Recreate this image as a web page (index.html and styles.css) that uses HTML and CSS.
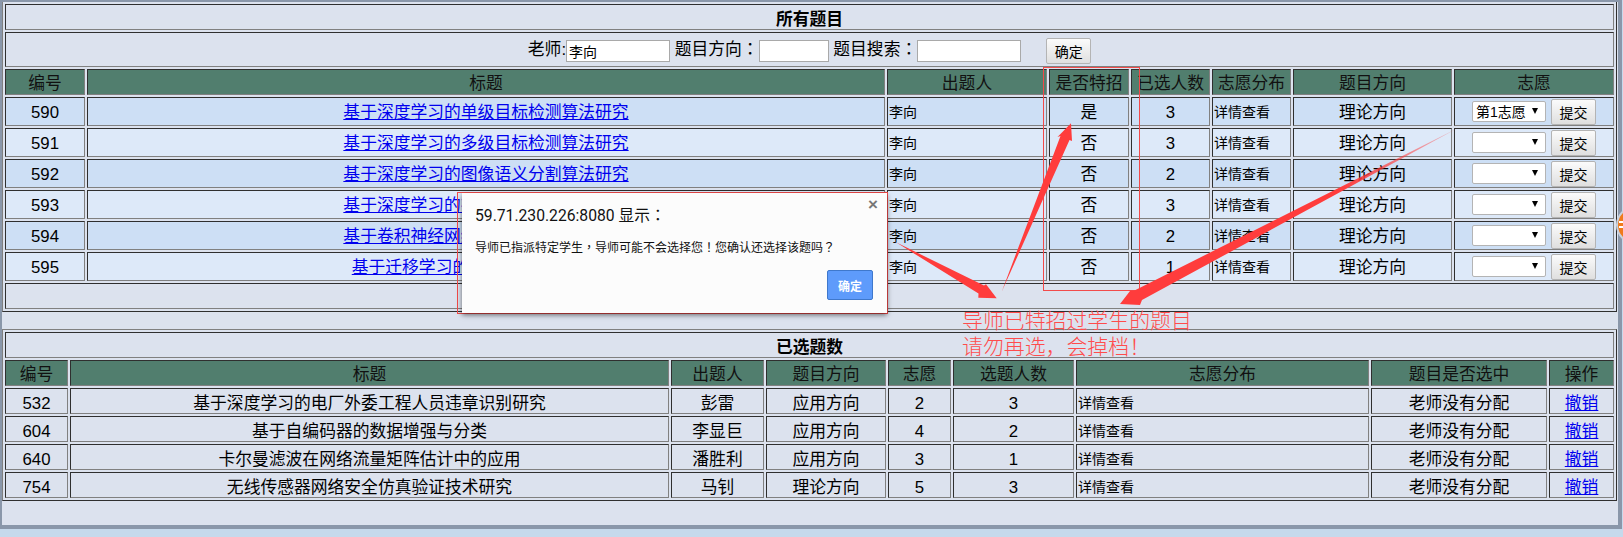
FILE: index.html
```html
<!DOCTYPE html>
<html lang="zh-CN">
<head>
<meta charset="utf-8">
<title>所有题目</title>
<link rel="stylesheet" href="styles.css">
</head>
<body>
<div class="frame">
  <table class="grid grid-all">
    <colgroup><col class="a1"><col class="a2"><col class="a3"><col class="a4"><col class="a5"><col class="a6"><col class="a7"><col class="a8"></colgroup>
    <tr class="r26"><td colspan="8" class="caption">所有题目</td></tr>
    <tr class="r35"><td colspan="8" class="search" lang="zh-TW">老师:<input class="in in-l" value="李向"> 题目方向：<input class="in in-s"> 题目搜索：<input class="in in-l"><button class="btn btn-go">确定</button></td></tr>
    <tr class="r26 head"><td>编号</td><td>标题</td><td>出题人</td><td>是否特招</td><td>已选人数</td><td>志愿分布</td><td>题目方向</td><td>志愿</td></tr>
    <tr class="r29 odd"><td>590</td><td><a href="#">基于深度学习的单级目标检测算法研究</a></td><td class="sm">李向</td><td>是</td><td>3</td><td class="sm">详情查看</td><td>理论方向</td><td class="pk"><div class="pick"><span class="sel"><select><option>第1志愿</option></select></span><button class="btn">提交</button></div></td></tr>
    <tr class="r29 even"><td>591</td><td><a href="#">基于深度学习的多级目标检测算法研究</a></td><td class="sm">李向</td><td>否</td><td>3</td><td class="sm">详情查看</td><td>理论方向</td><td class="pk"><div class="pick"><span class="sel"><select><option></option></select></span><button class="btn">提交</button></div></td></tr>
    <tr class="r29 odd"><td>592</td><td><a href="#">基于深度学习的图像语义分割算法研究</a></td><td class="sm">李向</td><td>否</td><td>2</td><td class="sm">详情查看</td><td>理论方向</td><td class="pk"><div class="pick"><span class="sel"><select><option></option></select></span><button class="btn">提交</button></div></td></tr>
    <tr class="r29 even"><td>593</td><td><a href="#">基于深度学习的视频目标跟踪算法研究</a></td><td class="sm">李向</td><td>否</td><td>3</td><td class="sm">详情查看</td><td>理论方向</td><td class="pk"><div class="pick"><span class="sel"><select><option></option></select></span><button class="btn">提交</button></div></td></tr>
    <tr class="r29 odd"><td>594</td><td><a href="#">基于卷积神经网络的目标识别算法研究</a></td><td class="sm">李向</td><td>否</td><td>2</td><td class="sm">详情查看</td><td>理论方向</td><td class="pk"><div class="pick"><span class="sel"><select><option></option></select></span><button class="btn">提交</button></div></td></tr>
    <tr class="r29 even"><td>595</td><td><a href="#">基于迁移学习的小样本图像分类研究</a></td><td class="sm">李向</td><td>否</td><td>1</td><td class="sm">详情查看</td><td>理论方向</td><td class="pk"><div class="pick"><span class="sel"><select><option></option></select></span><button class="btn">提交</button></div></td></tr>
    <tr class="r26"><td colspan="8"></td></tr>
  </table>

  <table class="grid grid-done">
    <colgroup><col class="b1"><col class="b2"><col class="b3"><col class="b4"><col class="b5"><col class="b6"><col class="b7"><col class="b8"><col class="b9"></colgroup>
    <tr class="r26"><td colspan="9" class="caption">已选题数</td></tr>
    <tr class="r26 head"><td>编号</td><td>标题</td><td>出题人</td><td>题目方向</td><td>志愿</td><td>选题人数</td><td>志愿分布</td><td>题目是否选中</td><td>操作</td></tr>
    <tr class="r26 low"><td>532</td><td>基于深度学习的电厂外委工程人员违章识别研究</td><td>彭雷</td><td>应用方向</td><td>2</td><td>3</td><td class="sm">详情查看</td><td>老师没有分配</td><td><a href="#">撤销</a></td></tr>
    <tr class="r26 low"><td>604</td><td>基于自编码器的数据增强与分类</td><td>李显巨</td><td>应用方向</td><td>4</td><td>2</td><td class="sm">详情查看</td><td>老师没有分配</td><td><a href="#">撤销</a></td></tr>
    <tr class="r26 low"><td>640</td><td>卡尔曼滤波在网络流量矩阵估计中的应用</td><td>潘胜利</td><td>应用方向</td><td>3</td><td>1</td><td class="sm">详情查看</td><td>老师没有分配</td><td><a href="#">撤销</a></td></tr>
    <tr class="r26 low"><td>754</td><td>无线传感器网络安全仿真验证技术研究</td><td>马钊</td><td>理论方向</td><td>5</td><td>3</td><td class="sm">详情查看</td><td>老师没有分配</td><td><a href="#">撤销</a></td></tr>
  </table>
</div>

<div class="dialog-mark"></div>
<div class="dialog">
  <span class="dialog-x">×</span>
  <div class="dialog-title" lang="zh-TW">59.71.230.226:8080 显示：</div>
  <div class="dialog-body" lang="zh-TW">导师已指派特定学生，导师可能不会选择您！您确认还选择该题吗？</div>
  <div class="dialog-foot"><button class="dialog-ok">确定</button></div>
</div>

<svg class="marks" width="1623" height="537" viewBox="0 0 1623 537" aria-hidden="true">
  <defs>
    <linearGradient id="fade" gradientUnits="userSpaceOnUse" x1="1458" y1="128" x2="1340" y2="190">
      <stop offset="0" stop-color="#ff3c3c" stop-opacity=".25"/>
      <stop offset="1" stop-color="#ff3c3c"/>
    </linearGradient>
  </defs>
  <rect x="1043.5" y="67.5" width="96" height="223" fill="none" stroke="#f24a4a"/>
  <polygon points="1001.7,291.7 1060.5,136 1057.5,137 1071,123.3 1072,141 1069.5,140" fill="#ff3c3c"/>
  <polygon points="896,242.3 984,285.5 986,284.3 996.7,298.3 978.3,297.7 978.5,293.5" fill="#ff3c3c"/>
  <polygon points="1458,128 1134.5,290.5 1130,291 1120,304 1140,305 1142,300" fill="url(#fade)"/>
  <circle cx="1635" cy="225" r="18" fill="#f07a1c" stroke="#c9d2de" stroke-width="2"/>
  <rect x="1619" y="221" width="4" height="2" fill="#fff"/>
  <rect x="1619" y="226" width="4" height="2" fill="#fff"/>
</svg>

<div class="note">导师已特招过学生的题目<br>请勿再选，会掉档！</div>
</body>
</html>
```

FILE: styles.css
```css
* { box-sizing: border-box; }

html, body {
  margin: 0;
  height: 537px;
  overflow: hidden;
}

body {
  position: relative;
  background: #c6d9ec;
  font-family: "Liberation Sans", "Noto Sans CJK SC", sans-serif;
  font-size: 16.8px;
  color: #000;
}

.frame {
  width: 1622px;
  height: 529px;
  background: #dce2ee;
  border-top: 2px solid #8a97aa;
  border-left: 2px solid #8a97aa;
  border-right: 4px solid #8a97aa;
  border-bottom: 4px solid #8a97aa;
}

.grid {
  table-layout: fixed;
  width: 1615px;
  border-collapse: separate;
  border-spacing: 2px;
  border: 1px solid;
  border-color: #808080 #2f2f2f #2f2f2f #808080;
}

.grid-all { border-top: 0; }
.grid-done { margin-top: 17px; }

.grid td {
  padding: 0;
  text-align: center;
  vertical-align: middle;
  border: 1px solid;
  border-color: #2f2f2f #808080 #808080 #2f2f2f;
  overflow: hidden;
  white-space: nowrap;
  line-height: 16px;
}

.a1 { width: 80px; }
.a2 { width: 798px; }
.a3 { width: 160px; }
.a4 { width: 80px; }
.a5 { width: 79px; }
.a6 { width: 79px; }
.a7 { width: 159px; }
.a8 { width: 160px; }

.b1 { width: 63px; }
.b2 { width: 599px; }
.b3 { width: 93px; }
.b4 { width: 120px; }
.b5 { width: 63px; }
.b6 { width: 121px; }
.b7 { width: 293px; }
.b8 { width: 176px; }
.b9 { width: 65px; }

.r26 { height: 26px; }
.r29 { height: 29px; }
.r35 { height: 35px; }

.grid .head td { background: #517e6e; color: #111; padding-top: 4px; }
.grid .odd td { background: #cddff5; padding-top: 2px; }
.grid .even td { background: #dde9f9; padding-top: 2px; }
.grid .low td { padding-top: 6px; }

.grid td.caption { font-weight: bold; padding-top: 6px; }
.grid td.search {
  padding-top: 2px;
  font-family: "Liberation Sans", "Noto Sans CJK TC", sans-serif;
}
.grid td.sm { text-align: left; padding-left: 1px; padding-top: 0; font-size: 14px; }
.grid .low td.sm { padding-top: 4px; }
.grid td.pk { padding-top: 0; }

.grid a { color: #0000ee; }

.in {
  height: 22px;
  padding: 0 2px;
  border: 1px solid #a9a9a9;
  background: #fff;
  font: 14px "Liberation Sans", "Noto Sans CJK SC", sans-serif;
  vertical-align: middle;
}
.in-l { width: 104px; }
.in-s { width: 70px; }

.btn {
  width: 45px;
  height: 26px;
  padding: 0;
  border: 1px solid #b4b4b4;
  border-radius: 2px;
  background: linear-gradient(#fbfbfb, #dfdfdf);
  font: 14px "Liberation Sans", "Noto Sans CJK SC", sans-serif;
  color: #000;
}

.btn-go {
  margin-left: 25px;
  vertical-align: middle;
}

.pick {
  display: flex;
  align-items: center;
  justify-content: center;
  gap: 5px;
}

.sel {
  position: relative;
  display: block;
  width: 74px;
  height: 21px;
}

.sel::after {
  content: "";
  position: absolute;
  right: 8px;
  top: 7px;
  border-left: 3px solid transparent;
  border-right: 3px solid transparent;
  border-top: 6px solid #000;
  pointer-events: none;
}

.sel select {
  display: block;
  width: 100%;
  height: 100%;
  padding: 0 0 0 3px;
  appearance: none;
  border: 1px solid #b4b4b4;
  border-radius: 2px;
  background: #fff;
  font: 14px "Liberation Sans", "Noto Sans CJK SC", sans-serif;
  color: #000;
}

.dialog-mark {
  position: absolute;
  left: 457px;
  top: 192px;
  width: 431px;
  height: 122px;
  border: 1px solid #f24a4a;
}

.dialog {
  position: absolute;
  left: 462px;
  top: 193px;
  width: 425px;
  height: 120px;
  padding: 13px 14px 0 13px;
  background: #fcfcfc;
  box-shadow: 0 2px 5px rgba(0, 0, 0, .55);
}

.dialog-x {
  position: absolute;
  right: 9px;
  top: 3px;
  font: bold 17px/18px "Liberation Sans", sans-serif;
  color: #777;
}

.dialog-title {
  font: 15.7px/20px Roboto, "Noto Sans CJK TC", sans-serif;
  color: #111;
}

.dialog-body {
  margin-top: 13px;
  font: 12px/18px "Liberation Sans", "Noto Sans CJK TC", sans-serif;
  color: #111;
}

.dialog-foot {
  display: flex;
  justify-content: flex-end;
  margin-top: 13px;
}

.dialog-ok {
  width: 46px;
  height: 30px;
  padding: 0;
  border: 1px solid #3f78cc;
  border-radius: 2px;
  background: #5e9bfb;
  color: #fff;
  font: bold 12px "Liberation Sans", "Noto Sans CJK SC", sans-serif;
}

.marks {
  position: absolute;
  left: 0;
  top: 0;
  pointer-events: none;
}

.note {
  position: absolute;
  left: 962px;
  top: 306px;
  font: 300 20.9px/26px "Noto Sans CJK SC", sans-serif;
  color: #ff4c4c;
}
```
